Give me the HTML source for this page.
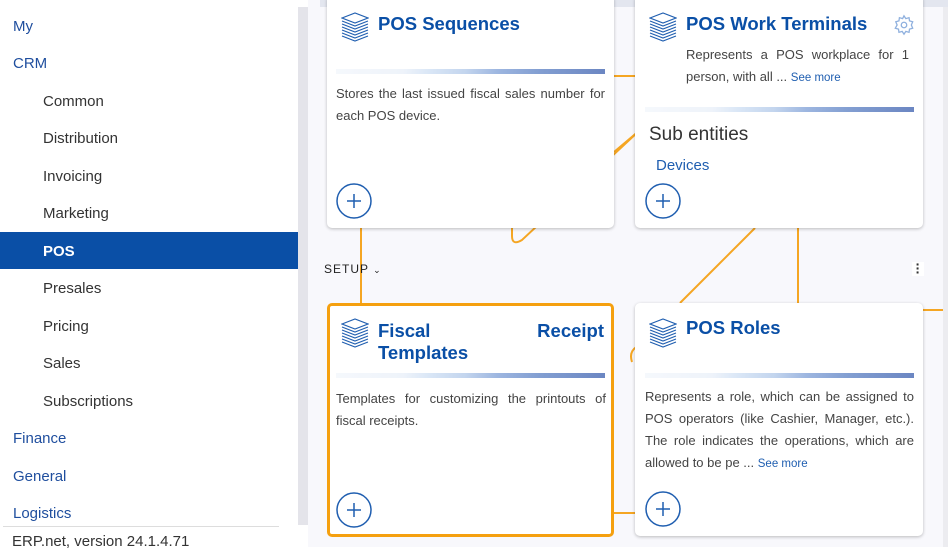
<!DOCTYPE html>
<html><head><meta charset="utf-8"><style>
*{margin:0;padding:0;box-sizing:border-box}
body{width:948px;height:547px;overflow:hidden;position:relative;background:#fff;font-family:"Liberation Sans",sans-serif}
.side{position:absolute;left:0;top:0;width:298px;height:547px;background:#fff}
.it{position:absolute;left:13px;font-size:15px;color:#1f4e9e;line-height:20px}
.sub{left:43px;color:#333}
.sel{position:absolute;left:0;top:232px;width:298px;height:37px;background:#0a4fa6}
.sb{position:absolute;left:298px;top:7px;width:10px;height:518px;background:#e4e4ea}
.main{position:absolute;left:308px;top:0;width:640px;height:547px;background:#f8f8fc}
.top{position:absolute;left:320px;top:0;width:628px;height:7px;background:#e3e6ef}
.rsb{position:absolute;left:943px;top:7px;width:5px;height:540px;background:#ececf0}
.card{position:absolute;background:#fff;border-radius:5px;box-shadow:0 1px 3px rgba(0,0,0,.25)}
.ttl{position:absolute;font-weight:bold;font-size:18.5px;color:#0a4fa6;line-height:22px}
.ic{position:absolute;width:28px;height:30px}
.bar{position:absolute;height:5px;background:linear-gradient(100deg,#f5f8fc 0%,#eef3fa 25%,#d9e6f6 35%,#c3d5ee 48%,#9db6e0 60%,#839fd2 75%,#6b86c2 100%)}
.txt{position:absolute;font-size:13px;color:#444;line-height:22px;text-align:justify}
.sm{font-size:11.5px;color:#1f5eb0}
.plus{position:absolute;width:36px;height:36px}
</style></head><body>
<div class="side">
<div class="it" style="top:17px">My</div>
<div class="it" style="top:54px">CRM</div>
<div class="it sub" style="top:92px">Common</div>
<div class="it sub" style="top:129px">Distribution</div>
<div class="it sub" style="top:167px">Invoicing</div>
<div class="it sub" style="top:204px">Marketing</div>
<div class="sel"></div>
<div class="it sub" style="top:242px;color:#fff;font-weight:bold">POS</div>
<div class="it sub" style="top:279px">Presales</div>
<div class="it sub" style="top:317px">Pricing</div>
<div class="it sub" style="top:354px">Sales</div>
<div class="it sub" style="top:392px">Subscriptions</div>
<div class="it" style="top:429px">Finance</div>
<div class="it" style="top:467px">General</div>
<div class="it" style="top:504px">Logistics</div>
<div style="position:absolute;left:3px;top:526px;width:276px;height:1px;background:#ddd"></div>
<div class="it" style="top:532px;color:#333;left:12px">ERP.net, version 24.1.4.71</div>
</div>
<div class="sb"></div>
<div class="main"></div>
<div class="top"></div>
<div class="rsb"></div>
<svg style="position:absolute;left:0;top:0" width="948" height="547" fill="none" stroke="#f5a623" stroke-width="2">
<path d="M361 228V303"/><path d="M614 76H635"/><path d="M614 152L640 130"/>
<path d="M512 228V236Q512 246 522 240L640 130"/>
<path d="M798 228V303"/><path d="M755 228L680 303"/>
<path d="M640 345Q628 350 632 362"/><path d="M614 513H635"/><path d="M923 310H943"/>
</svg>
<svg width="0" height="0" style="position:absolute"><defs>
<g id="stk" fill="none" stroke="#1f5eb0" stroke-width="1.1"><path d="M1 6L14 1L27 6L14 11Z"/><path d="M1 9L14 14L27 9"/><path d="M1 12L14 17L27 12"/><path d="M1 15L14 20L27 15"/><path d="M1 18L14 23L27 18"/><path d="M1 21L14 26L27 21"/><path d="M1 24L14 29L27 24"/></g>
<g id="pl" fill="none" stroke="#1f5eb0" stroke-width="1.5"><circle cx="18" cy="18" r="17"/><path d="M18 11V25M11 18H25"/></g>
</defs></svg>

<div class="card" style="left:327px;top:-5px;width:287px;height:233px">
<svg class="ic" style="left:14px;top:17px"><use href="#stk"/></svg>
<div class="ttl" style="left:51px;top:18px">POS Sequences</div>
<div class="bar" style="left:9px;top:74px;width:269px"></div>
<div class="txt" style="left:9px;top:88px;width:269px">Stores the last issued fiscal sales number for each POS device.</div>
<svg class="plus" style="left:9px;top:188px"><use href="#pl"/></svg>
</div>

<div class="card" style="left:635px;top:-5px;width:288px;height:233px">
<svg class="ic" style="left:14px;top:17px"><use href="#stk"/></svg>
<div class="ttl" style="left:51px;top:18px">POS Work Terminals</div>
<svg style="position:absolute;left:258px;top:19px" width="22" height="22" viewBox="0 0 24 24" fill="none" stroke="#8fb0de" stroke-width="1.4"><circle cx="12" cy="12" r="3"/><path d="M12 2l2 3 3.5-1 .5 3.5 3.5 1-1.5 3.5 1.5 3.5-3.5 1-.5 3.5-3.5-1-2 3-2-3-3.5 1-.5-3.5-3.5-1L4.5 12 3 8.5l3.5-1L7 4l3.5 1z"/></svg>
<div class="txt" style="left:51px;top:49px;width:223px">Represents a POS workplace for 1 person, with all ... <span class="sm">See more</span></div>
<div class="bar" style="left:10px;top:112px;width:269px"></div>
<div style="position:absolute;left:14px;top:129px;font-size:19px;color:#333">Sub entities</div>
<div style="position:absolute;left:21px;top:162px;font-size:15px;color:#1f5eb0">Devices</div>
<svg class="plus" style="left:10px;top:188px"><use href="#pl"/></svg>
</div>

<div style="position:absolute;left:324px;top:262px;font-size:12px;letter-spacing:1px;color:#222">SETUP <span style="font-size:9px">&#8964;</span></div>
<div style="position:absolute;left:912px;top:262px;width:12px;height:14px;background:#fff;color:#333;font-weight:bold;font-size:14px;line-height:4px;text-align:center">·<br>·<br>·</div>

<div class="card" style="left:327px;top:303px;width:287px;height:234px;border:3px solid #f5a00f;box-shadow:none">
<svg class="ic" style="left:11px;top:12px"><use href="#stk"/></svg>
<div class="ttl" style="left:48px;top:14px;width:226px">Fiscal<span style="float:right">Receipt</span><br>Templates</div>
<div class="bar" style="left:6px;top:67px;width:269px"></div>
<div class="txt" style="left:6px;top:82px;width:270px">Templates for customizing the printouts of fiscal receipts.</div>
<svg class="plus" style="left:6px;top:186px"><use href="#pl"/></svg>
</div>

<div class="card" style="left:635px;top:303px;width:288px;height:233px">
<svg class="ic" style="left:14px;top:15px"><use href="#stk"/></svg>
<div class="ttl" style="left:51px;top:14px">POS Roles</div>
<div class="bar" style="left:10px;top:70px;width:269px"></div>
<div class="txt" style="left:10px;top:83px;width:269px">Represents a role, which can be assigned to POS operators (like Cashier, Manager, etc.). The role indicates the operations, which are allowed to be pe ... <span class="sm">See more</span></div>
<svg class="plus" style="left:10px;top:188px"><use href="#pl"/></svg>
</div>
</body></html>
